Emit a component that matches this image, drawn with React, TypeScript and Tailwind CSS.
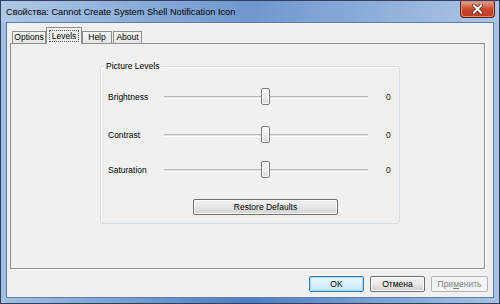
import React from 'react';

const font = { fontFamily: '"Liberation Sans", Arial, sans-serif' };

type SliderRowProps = {
  label: string;
  value: number;
  className?: string;
};

const SliderRow: React.FC<SliderRowProps> = ({ label, value, className }) => {
  return (
    <div className={`flex h-[20px] items-center ${className ?? ''}`}>
      <div className="w-[56px] text-[8.5px] text-black">{label}</div>
      <div className="relative h-[20px] w-[204px]">
        <div className="absolute left-0 right-0 top-[9px] h-[3px] border-t border-[#b9b9b9] bg-[#e2e2e2] border-b border-b-white" />
        <div className="absolute left-[97px] top-[1px] h-[17px] w-[9px] rounded-[2px] border border-[#7a7a7a] bg-gradient-to-b from-[#fbfbfb] via-[#ececec] to-[#d8d8d8] shadow-[inset_0_0_0_1px_#ffffff]" />
      </div>
      <div className="ml-[18px] text-[8.5px] text-[#222]">{value}</div>
    </div>
  );
};

type TabProps = {
  label: string;
  widthClass: string;
  selected?: boolean;
};

const Tab: React.FC<TabProps> = ({ label, widthClass, selected }) => {
  if (selected) {
    return (
      <div className={`relative z-10 -mx-[1px] mb-[-1px] flex h-[17px] items-center justify-center border border-b-0 border-[#8e8f8f] bg-[#f0f0f0] ${widthClass}`}>
        <span className="border border-dotted border-[#555] px-[2px] leading-[10px] text-[8.5px] text-black">{label}</span>
      </div>
    );
  }
  return (
    <div className={`flex h-[12px] items-center justify-center border border-b-0 border-[#8e8f8f] bg-gradient-to-b from-[#f6f6f6] to-[#e4e4e4] text-[8.5px] text-black ${widthClass}`}>
      {label}
    </div>
  );
};

const App: React.FC = () => {
  return (
    <div
      className="flex h-[304px] w-[500px] flex-col overflow-hidden border border-[#2f4060] bg-gradient-to-r from-[#a5bfe1] via-[#4f7dbf] to-[#a8c2e3]"
      style={font}
    >
      {/* title bar */}
      <div className="flex h-[21px] shrink-0 items-start justify-between bg-gradient-to-r from-[#b0c8e7] via-[#6f96cd] to-[#aec6e6]">
        <div className="pl-[5px] pt-[5px] text-[9.2px] leading-[12px] text-black">
          Свойства: Cannot Create System Shell Notification Icon
        </div>
        <div className="mr-[4px] flex h-[17px] w-[35px] items-center justify-center rounded-b-[4px] border border-t-0 border-[#5a2117] bg-gradient-to-b from-[#e6a795] via-[#c9492f] to-[#c0391f] shadow-[inset_0_0_0_1px_#e48a74]">
          <svg width="11" height="10" viewBox="0 0 11 10">
            <path d="M2 1.5 L9 8.5 M9 1.5 L2 8.5" stroke="#5a2a22" strokeWidth="3.6" strokeLinecap="square" />
            <path d="M2 1.5 L9 8.5 M9 1.5 L2 8.5" stroke="#ffffff" strokeWidth="2" strokeLinecap="square" />
          </svg>
        </div>
      </div>

      {/* client area */}
      <div className="mx-[5px] mb-[5px] flex flex-1 flex-col border border-[#5b7fb3] bg-[#f0f0f0] px-[3px] pt-[4px]">
        {/* tabs */}
        <div className="flex h-[16px] items-end gap-[1px] pl-[2px]">
          <Tab label="Options" widthClass="w-[34px]" />
          <Tab label="Levels" widthClass="w-[36px]" selected />
          <Tab label="Help" widthClass="w-[30px]" />
          <Tab label="About" widthClass="w-[29px]" />
        </div>

        {/* tab page */}
        <div className="mr-[5px] flex h-[226px] flex-col border border-[#8e8f8f] bg-[#f0f0f0] shadow-[1px_1px_0_#ffffff]">
          <div className="ml-[89px] mt-[22px] w-[300px]">
            <div className="relative flex flex-col rounded-[3px] border border-[#d5dfe5] pb-[8px] pl-[7px] pt-[20px] shadow-[inset_1px_1px_0_#ffffff]">
              <div className="absolute left-[3px] top-[-6px] bg-[#f0f0f0] px-[2px] text-[8.5px] leading-[11px] text-black">
                Picture Levels
              </div>
              <SliderRow label="Brightness" value={0} />
              <SliderRow label="Contrast" value={0} className="mt-[18px]" />
              <SliderRow label="Saturation" value={0} className="mt-[15px]" />
              <button
                type="button"
                className="ml-[85px] mt-[19px] flex h-[16px] w-[145px] items-center justify-center rounded-[2px] border border-[#707070] bg-gradient-to-b from-[#f3f3f3] via-[#e6e6e6] to-[#d2d2d2] text-[8.5px] text-black shadow-[inset_0_0_0_1px_#fbfbfb]"
              >
                Restore Defaults
              </button>
            </div>
          </div>
        </div>

        {/* dialog buttons */}
        <div className="mr-[2px] mt-[7px] flex justify-end gap-[6px]">
          <button
            type="button"
            className="flex h-[16px] w-[55px] items-center justify-center rounded-[2px] border border-[#3c7fb1] bg-gradient-to-b from-[#eaf6fd] via-[#d9f0fc] to-[#bee6fd] text-[8.5px] text-black shadow-[inset_0_0_0_1px_#9ddbf8]"
          >
            OK
          </button>
          <button
            type="button"
            className="flex h-[16px] w-[55px] items-center justify-center rounded-[2px] border border-[#707070] bg-gradient-to-b from-[#f2f2f2] via-[#e8e8e8] to-[#d0d0d0] text-[8.5px] text-black shadow-[inset_0_0_0_1px_#fbfbfb]"
          >
            Отмена
          </button>
          <button
            type="button"
            disabled
            className="flex h-[16px] w-[57px] items-center justify-center rounded-[2px] border border-[#adb2b5] bg-[#f4f4f4] text-[8.5px] text-[#838383]"
          >
            При<span className="underline">м</span>енить
          </button>
        </div>
      </div>
    </div>
  );
};

export default App;
